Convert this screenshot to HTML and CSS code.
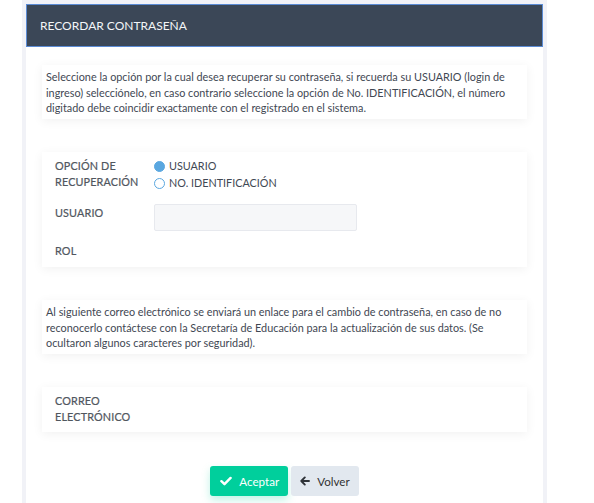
FILE: index.html
```html
<!DOCTYPE html>
<html lang="es">
<head>
    <meta charset="UTF-8">
    <meta name="viewport" content="width=device-width, initial-scale=1.0">
    <title>Recordar contraseña</title>
    <link rel="stylesheet" href="styles.css">
</head>
<body>

<div class="card">
    <div class="card-header">RECORDAR CONTRASEÑA</div>
    <div class="card-body">
        <div class="panel note">
            Seleccione la opción por la cual desea recuperar su contraseña, si recuerda su USUARIO (login de ingreso) selecciónelo, en caso contrario seleccione la opción de No. IDENTIFICACIÓN, el número digitado debe coincidir exactamente con el registrado en el sistema.
        </div>

        <div class="panel form">
            <div class="row">
                <label class="label">OPCIÓN DE RECUPERACIÓN</label>
                <div class="options">
                    <label class="radio"><span class="dot checked"></span>USUARIO</label>
                    <label class="radio"><span class="dot"></span>NO. IDENTIFICACIÓN</label>
                </div>
            </div>
            <div class="row row-input">
                <label class="label">USUARIO</label>
                <input type="text" class="field">
            </div>
            <div class="row row-rol">
                <label class="label">ROL</label>
            </div>
        </div>

        <div class="panel note">
            Al siguiente correo electrónico se enviará un enlace para el cambio de contraseña, en caso de no reconocerlo contáctese con la Secretaría de Educación para la actualización de sus datos. (Se ocultaron algunos caracteres por seguridad).
        </div>

        <div class="panel form mail">
            <div class="row">
                <label class="label">CORREO ELECTRÓNICO</label>
            </div>
        </div>

        <div class="actions">
            <button class="btn btn-ok">
                <svg width="12" height="12" viewBox="0 0 12 12"><path d="M1.4 6.2 L4.5 9.2 L10.6 2.9" fill="none" stroke="#fff" stroke-width="2.4" stroke-linecap="round" stroke-linejoin="round"/></svg>
                Aceptar
            </button>
            <button class="btn btn-back">
                <svg width="10" height="10" viewBox="0 0 10 10"><path d="M9 5 H1.6 M4.8 1.4 L1.3 5 L4.8 8.6" fill="none" stroke="#2f3338" stroke-width="1.9" stroke-linecap="round" stroke-linejoin="round"/></svg>
                Volver
            </button>
        </div>
    </div>
</div>

</body>
</html>
```

FILE: styles.css
```css
body {
    font-family: 'Lato', 'Noto Sans', sans-serif;
    background-color: #fff;
    margin: 0;
    color: #3f4853;
}
.card {
    margin-left: 22px;
    width: 517px;
    border: 4px solid #f1f2f7;
    border-bottom: none;
    min-height: 499px;
}
.card-header {
    background: #3b4757;
    border: 1px solid #5b8bd4;
    color: #f4f6f8;
    font-size: 12px;
    height: 41px;
    line-height: 41px;
    padding-left: 13px;
}
.card-body {
    padding: 18px 16px 0 16px;
    display: flex;
    flex-direction: column;
    gap: 33px;
}
.panel {
    background: #fff;
    box-shadow: 0 2px 10px rgba(0, 0, 0, 0.06);
}
.note {
    font-size: 10.85px;
    line-height: 15.5px;
    padding: 4px 6px 4px 4px;
    height: 46px;
}
.form {
    padding: 6px 13px 8px 13px;
}
.row {
    display: flex;
    align-items: flex-start;
    font-size: 11px;
}
.label {
    width: 99px;
    color: #50565e;
    line-height: 16px;
    font-size: 10.8px;
    letter-spacing: 0.15px;
    -webkit-text-stroke: 0.2px #50565e;
}
.options {
    display: flex;
    flex-direction: column;
    gap: 1px;
}
.radio {
    display: flex;
    align-items: center;
    gap: 4px;
    line-height: 16px;
    font-size: 10.8px;
}
.dot {
    width: 9px;
    height: 9px;
    border: 1px solid #5aa7e0;
    border-radius: 50%;
}
.dot.checked {
    background: #5aa7e0;
}
.row-input {
    margin-top: 13px;
}
.row-input .label {
    padding-top: 1px;
}
.field {
    width: 201px;
    height: 25px;
    background: #f6f7f9;
    border: 1px solid #e7e9ee;
    border-radius: 2px;
    padding: 0;
}
.row-rol {
    margin-top: 12px;
}
.mail {
    padding-bottom: 7px;
}
.actions {
    display: flex;
    justify-content: center;
    gap: 3px;
    margin-top: 1px;
}
.btn {
    font-family: 'Lato', 'Noto Sans', sans-serif;
    font-size: 11.6px;
    height: 30px;
    border: none;
    border-radius: 3px;
    display: flex;
    align-items: center;
    gap: 7px;
    padding: 0 9px 0 10px;
}
.btn svg {
    flex-shrink: 0;
}
.btn-ok {
    background: #00cf9c;
    color: #fff;
    box-shadow: 0 4px 8px rgba(0, 207, 156, 0.25);
}
.btn-back {
    background: #e2e8ef;
    color: #333;
    padding: 0 9px;
}
```
